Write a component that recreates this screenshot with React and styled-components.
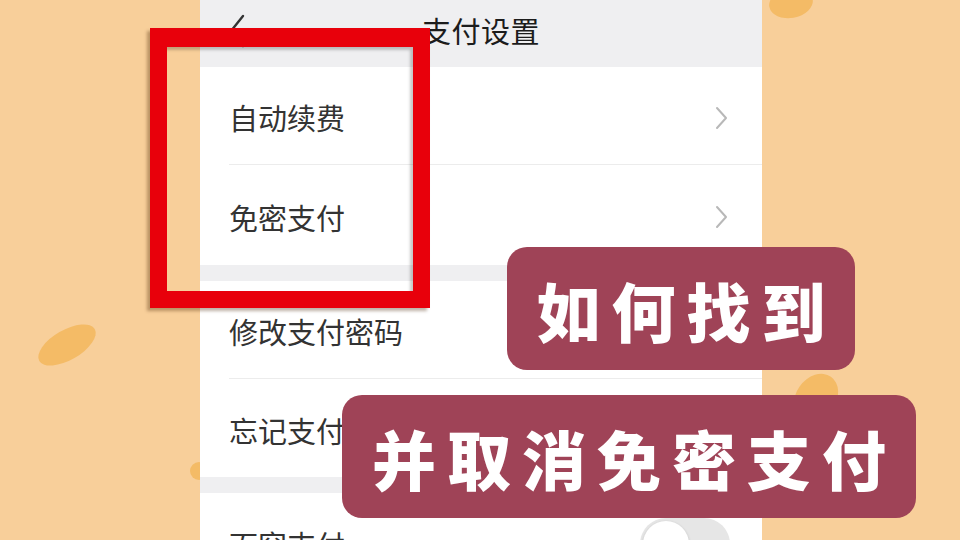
import React from "react";
import styled, { createGlobalStyle } from "styled-components";

const GlobalStyle = createGlobalStyle`
  body {
    margin: 0;
    background: #f8cf9a;
    font-family: "Noto Sans CJK SC", "Noto Sans", sans-serif;
  }
`;

const rows = [
  { label: "自动续费", arrow: true, divider: true, height: 98 },
  { label: "免密支付", arrow: true, divider: false, height: 100 },
  "gap",
  { label: "修改支付密码", arrow: false, divider: true, height: 98 },
  { label: "忘记支付密码", arrow: false, divider: false, height: 98 },
  "gap",
  { label: "面容支付", toggle: true, divider: false, height: 98 },
];

const blobs = [
  { x: 35, y: 330, w: 64, h: 30, r: -30 },
  { x: 769, y: -12, w: 44, h: 30, r: -10 },
  { x: 796, y: 372, w: 40, h: 52, r: 35 },
  { x: 190, y: 462, w: 18, h: 18, r: 0 },
];

const App = () => {
  return (
    <>
      <GlobalStyle />
      <Stage>
        {blobs.map((b, i) => (
          <Blob
            key={i}
            style={{
              left: b.x,
              top: b.y,
              width: b.w,
              height: b.h,
              transform: `rotate(${b.r}deg)`,
            }}
          />
        ))}
        <Phone>
          <Header>
            <BackButton>
              <svg width="16" height="34" viewBox="0 0 16 34">
                <polyline
                  points="14,2 2,17 14,32"
                  fill="none"
                  stroke="#333"
                  strokeWidth="2.4"
                  strokeLinecap="round"
                  strokeLinejoin="round"
                />
              </svg>
            </BackButton>
            <Title>支付设置</Title>
            <span />
          </Header>
          {rows.map((row, i) =>
            row === "gap" ? (
              <SectionGap key={i} />
            ) : (
              <Row key={i} height={row.height}>
                <RowInner divider={row.divider}>
                  <RowLabel>{row.label}</RowLabel>
                  {row.arrow && (
                    <svg width="13" height="24" viewBox="0 0 13 24">
                      <polyline
                        points="2,2 11,12 2,22"
                        fill="none"
                        stroke="#b8b8b8"
                        strokeWidth="2"
                        strokeLinecap="round"
                        strokeLinejoin="round"
                      />
                    </svg>
                  )}
                  {row.toggle && (
                    <Toggle>
                      <Knob />
                    </Toggle>
                  )}
                </RowInner>
              </Row>
            )
          )}
        </Phone>

        <Frame />
        <Caption left={507} top={247} width={348}>
          如何找到
        </Caption>
        <Caption left={342} top={395} width={574}>
          并取消免密支付
        </Caption>
      </Stage>
    </>
  );
};

export default App;

const Stage = styled.div`
  position: relative;
  width: 960px;
  height: 540px;
  overflow: hidden;
  background: #f8cf9a;
  display: flex;
  padding-left: 200px;
  box-sizing: border-box;
`;

const Blob = styled.div`
  position: absolute;
  border-radius: 50%;
  background: #f4bb66;
`;

const Phone = styled.div`
  position: relative;
  width: 562px;
  height: 600px;
  background: #fff;
  display: flex;
  flex-direction: column;
  flex-shrink: 0;
`;

const Header = styled.div`
  height: 67px;
  flex-shrink: 0;
  background: #efeff1;
  display: grid;
  grid-template-columns: 1fr auto 1fr;
  align-items: center;
  padding-bottom: 6px;
  box-sizing: border-box;
`;

const BackButton = styled.div`
  display: flex;
  align-items: center;
  padding-left: 29px;
`;

const Title = styled.div`
  font-size: 29px;
  line-height: 1;
  color: #1c1c1c;
  letter-spacing: 0.5px;
`;

const Row = styled.div`
  height: ${(p) => p.height}px;
  flex-shrink: 0;
  padding-left: 29px;
  box-sizing: border-box;
  display: flex;
`;

const RowInner = styled.div`
  flex: 1;
  display: flex;
  align-items: center;
  justify-content: space-between;
  padding: 4px 34px 0 0;
  border-bottom: ${(p) => (p.divider ? "1px solid #ececec" : "none")};
`;

const RowLabel = styled.span`
  font-size: 29px;
  line-height: 1;
  color: #333;
`;

const SectionGap = styled.div`
  height: 16px;
  flex-shrink: 0;
  background: #efeff1;
`;

const Toggle = styled.div`
  width: 90px;
  height: 52px;
  border-radius: 26px;
  background: #e6e6e6;
  display: flex;
  align-items: center;
  padding: 3px;
  box-sizing: border-box;
  margin-right: -2px;
`;

const Knob = styled.div`
  width: 46px;
  height: 46px;
  border-radius: 50%;
  background: #fff;
  box-shadow: 0 1px 3px rgba(0, 0, 0, 0.2);
`;

const Frame = styled.div`
  position: absolute;
  left: 150px;
  top: 28px;
  width: 280px;
  height: 280px;
  box-sizing: border-box;
  border: 17px solid #e8000b;
  border-top-width: 19px;
  box-shadow: -3px 3px 3px rgba(70, 35, 0, 0.35),
    inset -3px 3px 3px rgba(0, 0, 0, 0.22);
`;

const Caption = styled.div`
  position: absolute;
  left: ${(p) => p.left}px;
  top: ${(p) => p.top}px;
  width: ${(p) => p.width}px;
  height: 123px;
  border-radius: 20px;
  background: #9f4357;
  color: #fff;
  display: flex;
  align-items: center;
  justify-content: center;
  font-family: "Noto Sans CJK SC", sans-serif;
  font-weight: 900;
  font-size: 64px;
  letter-spacing: 11px;
  padding-left: 11px;
  box-sizing: border-box;
  line-height: 1;
`;
